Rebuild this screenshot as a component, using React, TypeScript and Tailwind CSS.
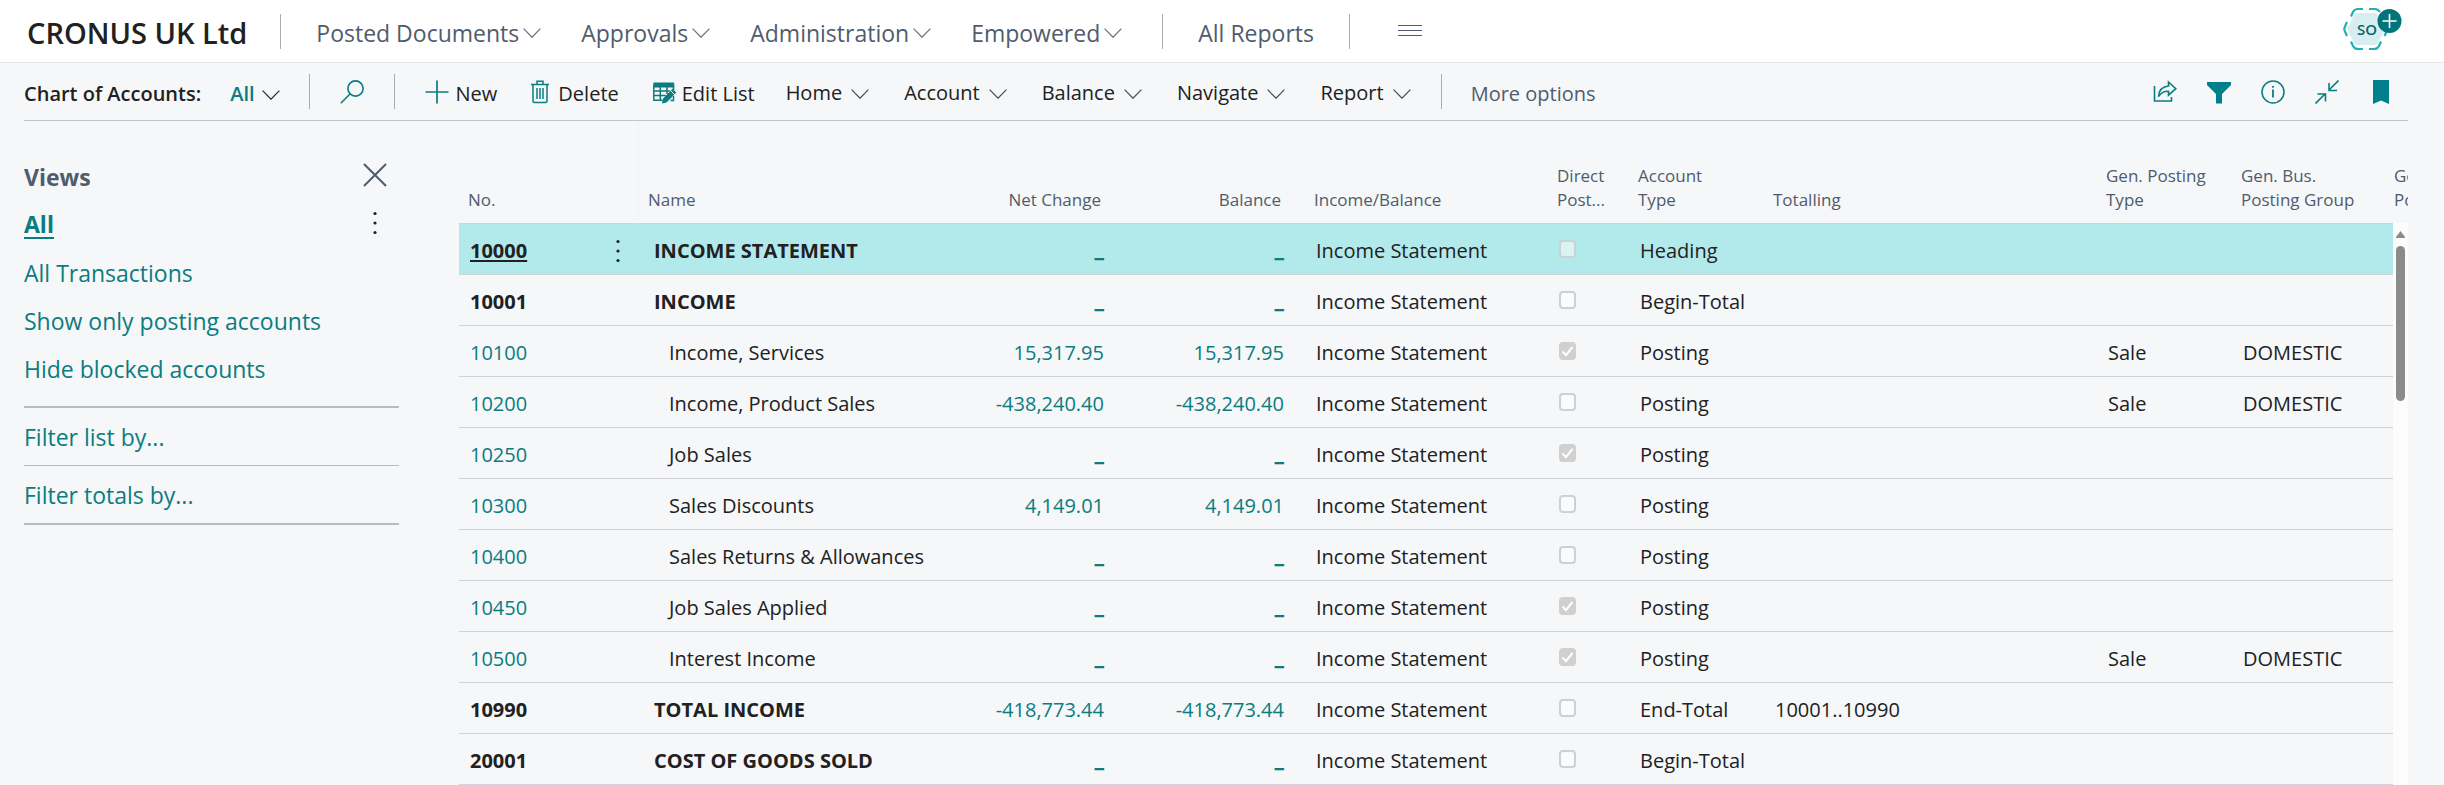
import type { ReactNode } from "react";

type Row = {
  no: string;
  name: string;
  bold?: boolean;
  net?: string;
  balance?: string;
  direct?: boolean;
  type: string;
  totalling?: string;
  genType?: string;
  genBus?: string;
};

const rows: Row[] = [
  { no: "10000", name: "INCOME STATEMENT", bold: true, type: "Heading" },
  { no: "10001", name: "INCOME", bold: true, type: "Begin-Total" },
  { no: "10100", name: "Income, Services", net: "15,317.95", balance: "15,317.95", direct: true, type: "Posting", genType: "Sale", genBus: "DOMESTIC" },
  { no: "10200", name: "Income, Product Sales", net: "-438,240.40", balance: "-438,240.40", type: "Posting", genType: "Sale", genBus: "DOMESTIC" },
  { no: "10250", name: "Job Sales", direct: true, type: "Posting" },
  { no: "10300", name: "Sales Discounts", net: "4,149.01", balance: "4,149.01", type: "Posting" },
  { no: "10400", name: "Sales Returns & Allowances", type: "Posting" },
  { no: "10450", name: "Job Sales Applied", direct: true, type: "Posting" },
  { no: "10500", name: "Interest Income", direct: true, type: "Posting", genType: "Sale", genBus: "DOMESTIC" },
  { no: "10990", name: "TOTAL INCOME", bold: true, net: "-418,773.44", balance: "-418,773.44", type: "End-Total", totalling: "10001..10990" },
  { no: "20001", name: "COST OF GOODS SOLD", bold: true, type: "Begin-Total" },
];

function Chevron({ className }: { className: string }) {
  return (
    <svg className={`h-[10px] w-[18px] shrink-0 ${className}`} viewBox="0 0 18 10" fill="none" stroke="currentColor" strokeWidth="1.3" aria-hidden="true">
      <path d="M0.6 0.6 9 9.2 17.4 0.6" />
    </svg>
  );
}

function Divider() {
  return <div className="h-[35px] w-px shrink-0 bg-[#a9adb3]" />;
}

function Dots() {
  return (
    <svg className="h-6 w-4" viewBox="0 0 16 24" fill="#212121" aria-hidden="true">
      <circle cx="8" cy="2.5" r="1.6" />
      <circle cx="8" cy="12" r="1.6" />
      <circle cx="8" cy="21.5" r="1.6" />
    </svg>
  );
}

function NavMenu({ children }: { children: ReactNode }) {
  return (
    <button type="button" className="flex items-center gap-1 pt-[3px] whitespace-nowrap">
      {children}
      <Chevron className="text-[#6b7482]" />
    </button>
  );
}

function ToolMenu({ children }: { children: ReactNode }) {
  return (
    <button type="button" className="flex items-center gap-[9px] pt-[3px] whitespace-nowrap">
      {children}
      <Chevron className="mt-0.5 text-[#505050]" />
    </button>
  );
}

function Amount({ value }: { value?: string }) {
  return (
    <a href="#entries" className={value ? "text-[#0b7c7f]" : "font-['Inter',sans-serif] leading-none font-bold text-[#0b7c7f]"}>
      {value ?? "_"}
    </a>
  );
}

function DirectPosting({ row }: { row: Row }) {
  return (
    <span className="relative block h-[18px] w-[17px]">
      <input
        type="checkbox"
        disabled
        defaultChecked={row.direct}
        aria-label={`Direct posting ${row.no}`}
        className="block h-[18px] w-[17px] appearance-none rounded-[4px] border-2 border-[#d0d0d0] bg-white/50 checked:bg-[#d0d0d0]"
      />
      {row.direct && (
        <svg className="absolute inset-0 h-[18px] w-[17px]" viewBox="0 0 17 18" fill="none" stroke="#fff" strokeWidth="2" aria-hidden="true">
          <path d="M3.5 9.5 7 13.2 13.5 4.8" />
        </svg>
      )}
    </span>
  );
}

function Header() {
  return (
    <header className="flex h-[63px] items-center border-b border-[#e4e6e8] bg-white pr-10 pl-[27px] text-[#505c6d]">
      <h1 className="mr-[33px] pt-[3px] text-[29px] leading-9 font-semibold whitespace-nowrap text-[#212121]">CRONUS UK Ltd</h1>
      <Divider />
      <nav className="ml-[35px] flex items-center gap-10 text-[23px] leading-8">
        <NavMenu>Posted Documents</NavMenu>
        <NavMenu>Approvals</NavMenu>
        <NavMenu>Administration</NavMenu>
        <NavMenu>Empowered</NavMenu>
        <Divider />
      </nav>
      <a href="#reports" className="mx-[35px] pt-[3px] text-[23px] leading-8 whitespace-nowrap">All Reports</a>
      <Divider />
      <button type="button" aria-label="Show all navigation" className="ml-12">
        <svg className="h-3 w-6" viewBox="0 0 24 12" stroke="#505c6d" strokeWidth="1.2" aria-hidden="true">
          <path d="M0 0.500h24M0 5.500h24M0 10.500h24" />
        </svg>
      </button>
      <button type="button" aria-label="Account manager" className="relative mb-1 ml-auto flex h-[44px] w-[61px] items-center">
        <svg className="h-[44px] w-[61px]" viewBox="0 0 61 44" fill="none" aria-hidden="true">
          <path d="M14 6h18q2 0 3 2l6 12q1 2 0 4l-6 12q-1 2-3 2H14q-2 0-3-2L5 24q-1-2 0-4l6-12q1-2 3-2z" fill="#d6eef0" />
          <g stroke="#1fb0b8" strokeWidth="2.2">
            <path d="M8 9.500 10 5q1.500-3 5-3h5" />
            <path d="M26 2h6q3 0 5 3" />
            <path d="M4 15 1.800 20q-1 2 0 4L4 29" />
            <path d="M8 34.500 10 39q1.500 3 5 3h5" />
            <path d="M26 42h5q3.500 0 5-3l2-4.500" />
            <path d="M41.500 29 43.500 24.500" />
          </g>
          <circle cx="46.500" cy="14" r="12" fill="#00747b" />
          <path d="M39.500 14h14M46.500 7v14" stroke="#fff" strokeWidth="1.600" />
        </svg>
        <span className="absolute top-[13px] left-[14px] text-[15px] leading-[18px] font-semibold text-[#0e6468]">SO</span>
      </button>
    </header>
  );
}

function Toolbar() {
  return (
    <div className="mr-9 ml-6 flex h-[58px] items-center border-b border-[#c2c6ca] pr-[19px] text-[20px] leading-7 text-[#212121]">
      <h2 className="mr-[29px] pt-1 font-semibold whitespace-nowrap">Chart of Accounts:</h2>
      <button type="button" className="mr-[29px] flex items-center gap-[7px] pt-1 font-semibold text-[#0b7c7f]">
        All
        <Chevron className="mt-0.5 text-[#303030]" />
      </button>
      <Divider />
      <button type="button" aria-label="Search" className="mx-[30px]">
        <svg className="h-6 w-6" viewBox="0 0 24 24" fill="none" stroke="#0b7c7f" strokeWidth="1.6" aria-hidden="true">
          <circle cx="15.500" cy="8.500" r="7.600" />
          <path d="M10 14 0.800 23.200" />
        </svg>
      </button>
      <Divider />
      <div className="ml-[30px] flex items-center gap-[34px]">
        <button type="button" className="flex items-center gap-[7px]">
          <svg className="h-6 w-6" viewBox="0 0 24 24" stroke="#0b7c7f" strokeWidth="1.700" aria-hidden="true">
            <path d="M0.500 12h23M12 0.500v23" />
          </svg>
          <span className="pt-1">New</span>
        </button>
        <button type="button" className="flex items-center gap-[9px]">
          <svg className="h-6 w-[18px]" viewBox="0 0 18 24" fill="none" stroke="#0b7c7f" strokeWidth="1.500" aria-hidden="true">
            <path d="M0 4.500h18M6 4.500V1.300h6v3.200M2 4.500v16.500q0 1.500 1.500 1.500h11q1.500 0 1.500-1.500V4.500M6 8v11M9 8v11M12 8v11" />
          </svg>
          <span className="pt-1">Delete</span>
        </button>
        <button type="button" className="flex items-center gap-[5px] whitespace-nowrap">
          <svg className="h-6 w-6" viewBox="0 0 24 24" fill="none" stroke="#0b7c7f" aria-hidden="true">
            <path d="M0.800 3h20v4h-20z" fill="#0b7c7f" />
            <path d="M0.800 6v14.200h9M0.800 11h16M0.800 15.500h12M7.300 6v14M14 6v8M20.500 6v4" strokeWidth="1.500" />
            <path d="m9.500 23 1.200-4.500L19.500 9.300l3.300 3.200-9 9.300z" fill="#0b7c7f" />
            <path d="m17.500 10.500 4 4" stroke="#f5f7f9" strokeWidth="1" />
            <path d="M20.500 16v4.500h-3" strokeWidth="1.500" />
          </svg>
          <span className="pt-1">Edit List</span>
        </button>
      </div>
      <div className="ml-[31px] flex items-center gap-[35px]">
        <ToolMenu>Home</ToolMenu>
        <ToolMenu>Account</ToolMenu>
        <ToolMenu>Balance</ToolMenu>
        <ToolMenu>Navigate</ToolMenu>
        <ToolMenu>Report</ToolMenu>
      </div>
      <div className="ml-[30px] flex items-center gap-[29px]">
        <Divider />
        <button type="button" className="pt-1 whitespace-nowrap text-[#505c6d]">More options</button>
      </div>
      <div className="ml-auto flex items-center gap-[30px]">
        <button type="button" aria-label="Share">
          <svg className="h-6 w-6" viewBox="0 0 24 24" fill="none" stroke="#0b7c7f" strokeWidth="1.600" aria-hidden="true">
            <path d="M1.500 6v15h17v-4" />
            <path d="M5.500 16.500C6 10 10 6.500 15.500 6V2l7.300 6.700-7.300 6.500v-4c-4-.2-7.500 1.300-10 5.300z" />
          </svg>
        </button>
        <button type="button" aria-label="Filter">
          <svg className="h-6 w-6" viewBox="0 0 24 24" fill="#00808a" aria-hidden="true">
            <path d="M0 2h24v3l-9 9v9.500H9V14L0 5z" />
          </svg>
        </button>
        <button type="button" aria-label="Details">
          <svg className="h-6 w-6" viewBox="0 0 24 24" fill="none" stroke="#0b7c7f" strokeWidth="1.500" aria-hidden="true">
            <circle cx="12" cy="12" r="11" />
            <path d="M12 9.500v8M12 6v1.800" strokeWidth="1.800" />
          </svg>
        </button>
        <button type="button" aria-label="Collapse page">
          <svg className="h-6 w-6" viewBox="0 0 24 24" fill="none" stroke="#0b7c7f" strokeWidth="1.600" aria-hidden="true">
            <path d="M23.500 0.500 14 10M14 3v7.500h8M0.500 23.500 10 14M2.500 14h8v7.500" />
          </svg>
        </button>
        <button type="button" aria-label="Bookmark" className="ml-1">
          <svg className="h-6 w-4" viewBox="0 0 16 24" fill="#00808a" aria-hidden="true">
            <path d="M0 0h16v24l-8-3.500L0 24z" />
          </svg>
        </button>
      </div>
    </div>
  );
}

function Views() {
  return (
    <aside className="w-[375px] shrink-0 pt-8 text-[23px] leading-8 text-[#0b7c7f]">
      <div className="flex h-12 items-center justify-between pr-3">
        <h3 className="font-bold text-[#505c6d]">Views</h3>
        <button type="button" aria-label="Close views" className="mb-1">
          <svg className="h-6 w-6" viewBox="0 0 24 24" stroke="#505c6d" strokeWidth="2" aria-hidden="true">
            <path d="m1 1 22 22M23 1 1 23" />
          </svg>
        </button>
      </div>
      <ul>
        <li className="flex h-12 items-center justify-between pr-4">
          <a href="#all" className="border-b-2 border-[#0b7c7f] leading-[26px] font-bold">All</a>
          <button type="button" aria-label="View options" className="mb-1"><Dots /></button>
        </li>
        <li className="flex h-12 items-center"><a href="#transactions">All Transactions</a></li>
        <li className="flex h-12 items-center"><a href="#posting">Show only posting accounts</a></li>
        <li className="flex h-12 items-center"><a href="#blocked">Hide blocked accounts</a></li>
      </ul>
      <div className="mt-[13px] border-y-2 border-[#b7bcc1]">
        <button type="button" className="flex h-[58px] w-full items-center border-b border-[#b7bcc1]">Filter list by...</button>
        <button type="button" className="flex h-[57px] w-full items-center">Filter totals by...</button>
      </div>
    </aside>
  );
}

function Accounts() {
  return (
    <div className="relative min-w-0 flex-1 overflow-hidden">
      <table className="w-full table-fixed border-separate border-spacing-0 text-left text-[20px] leading-7 text-[#212121]">
        <colgroup>
          <col className="w-[138px]" />
          <col className="w-[42px]" />
          <col className="w-[291px]" />
          <col className="w-[195px]" />
          <col className="w-[180px]" />
          <col className="w-[243px]" />
          <col className="w-[81px]" />
          <col className="w-[135px]" />
          <col />
          <col className="w-[135px]" />
          <col className="w-[153px]" />
          <col className="w-[23px]" />
        </colgroup>
        <thead>
          <tr className="h-[103px] align-bottom text-[17px] leading-6 text-[#505c6d] *:border-b *:border-b-[#d0d4d8] *:pb-[11px] *:pl-[9px] *:font-normal">
            <th>No.</th>
            <th className="border-r border-r-[#eff1f4]" aria-label="Row actions" />
            <th>Name</th>
            <th className="pr-6 text-right">Net Change</th>
            <th className="pr-6 text-right">Balance</th>
            <th>Income/Balance</th>
            <th>Direct<br />Post...</th>
            <th>Account<br />Type</th>
            <th>Totalling</th>
            <th className="whitespace-nowrap">Gen. Posting<br />Type</th>
            <th className="whitespace-nowrap">Gen. Bus.<br />Posting Group</th>
            <th className="overflow-hidden whitespace-nowrap">Gen. Prod.<br />Posting Group</th>
          </tr>
        </thead>
        <tbody>
          {rows.map((row, i) => (
            <tr key={row.no} className={`h-[51px] whitespace-nowrap *:border-b *:border-b-[#d0d4d8] *:p-0 *:pl-[11px] *:pt-1 ${i === 0 ? "bg-[#b2e9eb]" : ""}`}>
              <td>
                <a href={`#${row.no}`} className={row.bold ? (i === 0 ? "font-bold underline decoration-2 underline-offset-2" : "font-bold") : "text-[#0b7c7f]"}>
                  {row.no}
                </a>
              </td>
              <td>{i === 0 && <button type="button" aria-label="Row options" className="ml-0.5 flex"><Dots /></button>}</td>
              <td>
                <span className={row.bold ? "ml-1 font-bold" : "ml-[19px]"}>{row.name}</span>
              </td>
              <td className="text-right"><span className="mr-[21px]"><Amount value={row.net} /></span></td>
              <td className="text-right"><span className="mr-[21px]"><Amount value={row.balance} /></span></td>
              <td>Income Statement</td>
              <td className="pt-0!"><DirectPosting row={row} /></td>
              <td>{row.type}</td>
              <td>{row.totalling}</td>
              <td>{row.genType}</td>
              <td>{row.genBus}</td>
              <td />
            </tr>
          ))}
        </tbody>
      </table>
      <div className="absolute top-[102px] right-0 bottom-0 flex w-[15px] flex-col items-center bg-[#fcfcfc] pt-2">
        <svg className="h-[7px] w-[9px]" viewBox="0 0 9 7" fill="#8b8b8b" aria-hidden="true">
          <path d="M4.500 0 9 6v1H0V6z" />
        </svg>
        <div className="mt-2 h-[155px] w-[9px] rounded-full bg-[#8b8b8b]" />
      </div>
    </div>
  );
}

export default function App() {
  return (
    <div className="min-h-screen bg-[#f5f7f9] font-['Open_Sans','Noto_Sans',sans-serif]">
      <Header />
      <Toolbar />
      <main className="mr-9 ml-6 flex gap-[60px]">
        <Views />
        <Accounts />
      </main>
    </div>
  );
}
